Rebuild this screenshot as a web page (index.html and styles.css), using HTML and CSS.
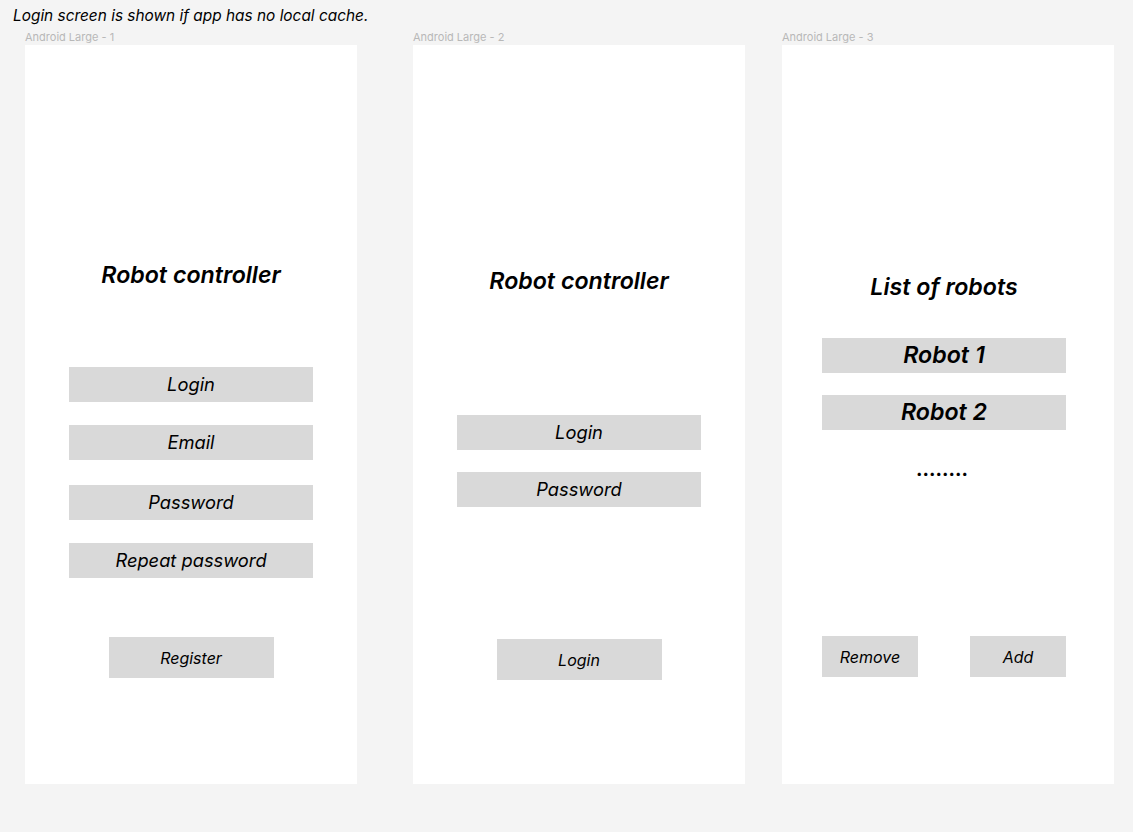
FILE: index.html
```html
<!DOCTYPE html>
<html lang="en">
<head>
<meta charset="utf-8">
<title>Robot controller wireframes</title>
<link rel="stylesheet" href="styles.css">
</head>
<body>
<p class="caption">Login screen is shown if app has no local cache.</p>
<div class="canvas">
  <section class="artboard ab1">
    <div class="ab-label">Android Large - 1</div>
    <div class="frame f1">
      <h1 class="title">Robot controller</h1>
      <div class="field first">Login</div>
      <div class="field g23">Email</div>
      <div class="field g25">Password</div>
      <div class="field g23">Repeat password</div>
      <div class="btn reg">Register</div>
    </div>
  </section>
  <section class="artboard ab2">
    <div class="ab-label">Android Large - 2</div>
    <div class="frame f2">
      <h1 class="title">Robot controller</h1>
      <div class="field first">Login</div>
      <div class="field g22">Password</div>
      <div class="btn login">Login</div>
    </div>
  </section>
  <section class="artboard ab3">
    <div class="ab-label">Android Large - 3</div>
    <div class="frame f3">
      <div class="col">
        <h1 class="title">List of robots</h1>
        <div class="robot first">Robot 1</div>
        <div class="robot g22">Robot 2</div>
        <div class="dots">........</div>
        <div class="actions">
          <div class="btn small">Remove</div>
          <div class="btn small">Add</div>
        </div>
      </div>
    </div>
  </section>
</div>
</body>
</html>
```
FILE: styles.css
```css
html, body {
  margin: 0;
  padding: 0;
}
body {
  background: #f4f4f4;
  font-family: Inter, "Liberation Sans", sans-serif;
  color: #000;
  width: 1133px;
  height: 832px;
  overflow: hidden;
}
.caption {
  margin: 0;
  padding: 6px 0 0 13px;
  height: 20px;
  line-height: 20px;
  font-size: 15.4px;
  font-style: italic;
  font-weight: 400;
}
.canvas {
  display: flex;
  padding-left: 25px;
  margin-top: 4px;
}
.artboard {
  display: flex;
  flex-direction: column;
  width: 332px;
}
.ab2 { margin-left: 56px; }
.ab3 { margin-left: 37px; }
.ab-label {
  height: 15px;
  line-height: 15px;
  font-size: 11px;
  color: #b8b8b8;
}
.frame {
  background: #fff;
  height: 739px;
  display: flex;
  flex-direction: column;
  align-items: center;
}
.title {
  margin: 0;
  height: 30px;
  line-height: 30px;
  font-size: 23.2px;
  font-weight: 600;
  font-style: italic;
  text-align: center;
}
.f1 .title { margin-top: 215px; }
.f2 .title { margin-top: 221px; }
.field, .robot {
  width: 244px;
  height: 35px;
  background: #d9d9d9;
  display: flex;
  align-items: center;
  justify-content: center;
  font-size: 18.3px;
  font-style: italic;
  padding-bottom: 1px;
  box-sizing: border-box;
}
.robot {
  font-size: 23.2px;
  font-weight: 600;
}
.f1 .field.first { margin-top: 77px; }
.f2 .field.first { margin-top: 119px; }
.g22 { margin-top: 22px; }
.g23 { margin-top: 23px; }
.g25 { margin-top: 25px; }
.btn {
  width: 165px;
  height: 41px;
  background: #d9d9d9;
  display: flex;
  align-items: center;
  justify-content: center;
  font-size: 16px;
  font-style: italic;
}
.btn.reg { margin-top: 59px; }
.btn.login { margin-top: 132px; }
.f3 {
  align-items: flex-start;
  padding-left: 40px;
}
.col {
  width: 244px;
  display: flex;
  flex-direction: column;
  align-items: center;
}
.f3 .title { margin-top: 227px; }
.robot.first { margin-top: 36px; }
.dots {
  margin-top: 34px;
  height: 19px;
  line-height: 10px;
  font-size: 19.4px;
  font-weight: 700;
  padding-right: 4px;
}
.actions {
  margin-top: 153px;
  width: 244px;
  display: flex;
  justify-content: space-between;
}
.btn.small { width: 96px; }
```
